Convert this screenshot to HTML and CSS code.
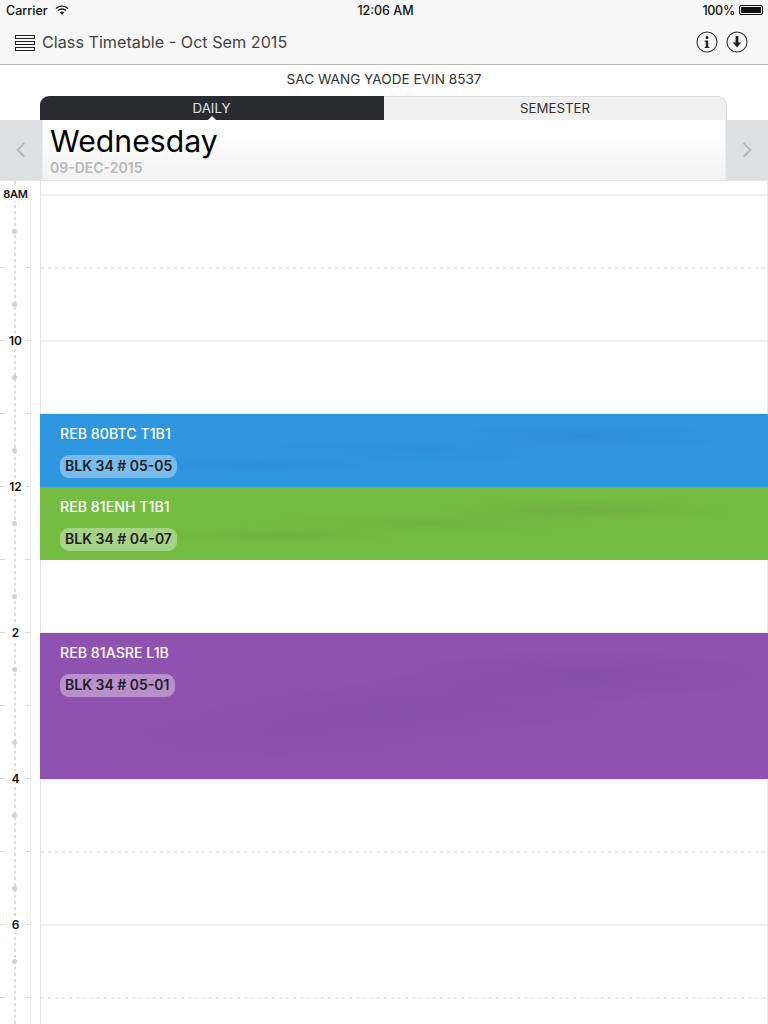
FILE: index.html
```html
<!doctype html>
<html>

<head>
    <meta charset="utf-8">
    <title>Class Timetable</title>
    <link rel="stylesheet" href="styles.css">
</head>

<body>
    <header class="top">
        <div class="status">
            <div class="status-left">
                <span>Carrier</span>
                <svg class="wifi" width="14" height="10" viewBox="0 0 14 10">
                    <path d="M1 3.6a8.6 8.6 0 0 1 12 0" fill="none" stroke="#111" stroke-width="1.4" />
                    <path d="M3.1 5.6a5.6 5.6 0 0 1 7.8 0" fill="none" stroke="#111" stroke-width="1.4" />
                    <path d="M7 9.8 4.9 7.5a3 3 0 0 1 4.2 0z" fill="#111" />
                </svg>
            </div>
            <div class="status-time">12:06 AM</div>
            <div class="status-right">
                <span class="percent">100%</span>
                <span class="battery"><span class="battery-fill"></span></span>
            </div>
        </div>
        <div class="nav">
            <span class="burger"><i></i><i></i><i></i></span>
            <span class="nav-title">Class Timetable - Oct Sem 2015</span>
            <svg class="nav-icon" width="22" height="22" viewBox="0 0 22 22">
                <circle cx="11" cy="11" r="10" fill="none" stroke="#333" stroke-width="1.1" />
                <circle cx="11" cy="6.4" r="1.5" fill="#222" />
                <path d="M8.8 9.4h3.4v6.4h1.1v1.3H8.7v-1.3h1.1v-5.1h-1z" fill="#222" />
            </svg>
            <svg class="nav-icon" width="22" height="22" viewBox="0 0 22 22">
                <circle cx="11" cy="11" r="10" fill="none" stroke="#333" stroke-width="1.1" />
                <path d="M9.6 5h2.8v6.4h2.8L11 16.6l-4.200-5.200h2.800z" fill="#222" />
            </svg>
        </div>
    </header>

    <div class="student">SAC WANG YAODE EVIN 8537</div>

    <div class="tabs">
        <div class="tab tab-on">DAILY</div>
        <div class="tab">SEMESTER</div>
    </div>

    <div class="dayrow">
        <div class="daybtn">
            <svg width="10" height="16" viewBox="0 0 10 16">
                <path d="M8.500 1 1.500 8l7 7" fill="none" stroke="#b9b9b9" stroke-width="2" />
            </svg>
        </div>
        <div class="dayname">
            <div class="day-big">Wednesday</div>
            <div class="day-date">09-DEC-2015</div>
        </div>
        <div class="daybtn">
            <svg width="10" height="16" viewBox="0 0 10 16">
                <path d="M1.500 1l7 7-7 7" fill="none" stroke="#b9b9b9" stroke-width="2" />
            </svg>
        </div>
    </div>

    <div class="table">
        <div class="axis">
            <div class="hour hour-first"><div class="mark"><b>8AM</b></div><i class="dot"></i></div>
            <div class="hour"><div class="mark"><u></u><u></u></div><i class="dot"></i></div>
            <div class="hour"><div class="mark"><u></u><b>10</b><u></u></div><i class="dot"></i></div>
            <div class="hour"><div class="mark"><u></u><u></u></div><i class="dot"></i></div>
            <div class="hour"><div class="mark"><u></u><b>12</b><u></u></div><i class="dot"></i></div>
            <div class="hour"><div class="mark"><u></u><u></u></div><i class="dot"></i></div>
            <div class="hour"><div class="mark"><u></u><b>2</b><u></u></div><i class="dot"></i></div>
            <div class="hour"><div class="mark"><u></u><u></u></div><i class="dot"></i></div>
            <div class="hour"><div class="mark"><u></u><b>4</b><u></u></div><i class="dot"></i></div>
            <div class="hour"><div class="mark"><u></u><u></u></div><i class="dot"></i></div>
            <div class="hour"><div class="mark"><u></u><b>6</b><u></u></div><i class="dot"></i></div>
            <div class="hour"><div class="mark"><u></u><u></u></div><i class="dot"></i></div>
        </div>
        <div class="day">
            <div class="slot solid"></div>
            <div class="slot dashed"></div>
            <div class="slot solid"></div>
            <div class="slot lesson blue">
                <div class="lesson-name">REB 80BTC T1B1</div>
                <span class="room">BLK 34 # 05-05</span>
            </div>
            <div class="slot lesson green">
                <div class="lesson-name">REB 81ENH T1B1</div>
                <span class="room">BLK 34 # 04-07</span>
            </div>
            <div class="slot"></div>
            <div class="slot slot-long lesson purple">
                <div class="lesson-name">REB 81ASRE L1B</div>
                <span class="room">BLK 34 # 05-01</span>
            </div>
            <div class="slot solid"></div>
            <div class="slot dashed"></div>
            <div class="slot solid"></div>
            <div class="slot dashed"></div>
        </div>
    </div>
</body>

</html>
```

FILE: styles.css
```css
* {
    margin: 0;
    box-sizing: border-box;
}

body {
    width: 768px;
    height: 1024px;
    overflow: hidden;
    background: #fff;
    font-family: Inter, "Noto Sans", sans-serif;
    color: #222;
}

/* status bar + nav */
.top {
    height: 65px;
    background: #f7f7f7;
    border-bottom: 1px solid #b4b4b4;
}

.status {
    height: 20px;
    padding: 0 5px 0 6px;
    display: grid;
    grid-template-columns: 1fr auto 1fr;
    align-items: center;
    font-size: 12.500px;
    font-weight: 500;
    color: #111;
}

.status-left {
    display: flex;
    align-items: center;
    gap: 7px;
}

.status-time {
    padding-left: 2px;
}

.status-right {
    display: flex;
    justify-content: flex-end;
    align-items: center;
    gap: 4px;
}

.percent {
    letter-spacing: -.3px;
}

.battery {
    width: 24px;
    height: 10px;
    padding: 1px;
    border: 1px solid #111;
    border-radius: 2px;
}

.battery-fill {
    display: block;
    height: 100%;
    background: #111;
    border-radius: 1px;
}

.nav {
    height: 44px;
    padding: 0 20px 0 15px;
    display: flex;
    align-items: center;
}

.burger {
    width: 20px;
    display: flex;
    flex-direction: column;
    gap: 2px;
    margin-top: 1px;
}

.burger i {
    height: 4px;
    border: 1px solid #222;
    background: #f7f7f7;
}

.nav-title {
    margin-left: 7px;
    flex: 1;
    font-size: 16.200px;
    color: #444;
}

.nav-icon {
    margin-left: 8px;
}

.student {
    height: 31px;
    line-height: 29px;
    text-align: center;
    font-size: 13.600px;
    color: #333;
}

/* tabs */
.tabs {
    height: 24px;
    margin: 0 41px 0 40px;
    display: flex;
}

.tab {
    flex: 1;
    line-height: 22px;
    text-align: center;
    font-size: 13.300px;
    color: #333;
    background: #f0f0f0;
    border: 1px solid #dcdcdc;
    border-bottom: 0;
    border-left: 0;
    border-radius: 0 9px 0 0;
}

.tab-on {
    flex: none;
    width: 344px;
    position: relative;
    line-height: 24px;
    color: #e2e2e2;
    background: #2a2b30;
    border: 0;
    border-radius: 9px 0 0 0;
    padding-right: 1px;
}

.tab-on:after {
    content: "";
    position: absolute;
    left: 168px;
    bottom: 0;
    border: 4px solid transparent;
    border-top: 0;
    border-bottom: 4px solid #fff;
}

/* day header */
.dayrow {
    height: 61px;
    display: flex;
    border-bottom: 1px solid #e4e4e4;
}

.daybtn {
    width: 42px;
    background: #dfe0e1;
    display: flex;
    align-items: center;
    justify-content: center;
}

.dayname {
    flex: 1;
    padding-left: 7px;
    background: linear-gradient(#fff 25%, #f1f1f1);
    border-left: 1px solid #ececec;
    border-right: 1px solid #ececec;
}

.day-big {
    font-size: 30.200px;
    line-height: 42px;
    color: #000;
}

.day-date {
    font-size: 14px;
    font-weight: 600;
    line-height: 16px;
    margin-top: -2px;
    color: #b8b8b8;
}

/* timetable */
.table {
    display: flex;
}

.axis {
    width: 31px;
    margin-right: 9px;
    padding-top: 13px;
    height: 843px;
    border-right: 1px solid #efefef;
    border-top-right-radius: 6px;
    background: repeating-linear-gradient(#dcdcdc 0 3px, #fff 3px 6px) no-repeat 14px 0 / 2px 100%;
}

.hour {
    height: 73px;
    display: flex;
    flex-direction: column;
    align-items: center;
}

.mark {
    width: 100%;
    height: 12px;
    margin-top: -6px;
    display: flex;
    align-items: center;
    justify-content: space-between;
}

.mark u {
    width: 5px;
    height: 1px;
    background: #d8d8d8;
}

.mark b {
    margin-left: 1px;
    padding: 0 2px;
    background: #fff;
    font-size: 12px;
    font-weight: 600;
    color: #111;
}

.hour-first .mark {
    justify-content: center;
}

.hour-first .mark b {
    font-size: 11px;
    padding: 0;
    letter-spacing: -.2px;
}

.dot {
    width: 5px;
    height: 5px;
    margin-top: 29px;
    margin-right: 1px;
    border-radius: 50%;
    background: #d2d2d2;
}

.day {
    flex: 1;
    height: 843px;
    padding-top: 14px;
    border-left: 1px solid #e2e2e2;
    border-right: 1px solid #e8e8e8;
}

.slot {
    height: 73px;
}

.slot-long {
    height: 146px;
}

.solid,
.dashed {
    height: 74px;
    margin-top: -1px;
}

.solid {
    border-top: 2px solid #f0f0f0;
}

.dashed {
    background: repeating-linear-gradient(90deg, #e9e9e9 0 3px, transparent 3px 7px) no-repeat 0 0 / 100% 2px;
}

.lesson {
    position: relative;
    margin: 0 -1px;
    padding: 12px 20px 0;
}

.lesson-name {
    font-size: 14.200px;
    font-weight: 500;
    line-height: 16px;
    color: #fff;
}

.room {
    display: inline-block;
    margin-top: 13px;
    padding: 0 5px;
    height: 23px;
    line-height: 22px;
    border-radius: 9px;
    background: rgba(255, 255, 255, .36);
    font-size: 14px;
    font-weight: 600;
    color: #222;
}

.blue {
    box-shadow: 0 -1px 0 #e6e6e6;
    background:
        radial-gradient(170px 12px at 544px 23px, rgba(0, 0, 0, .05), transparent),
        radial-gradient(190px 12px at 387px 36px, rgba(0, 0, 0, .04), transparent),
        radial-gradient(130px 10px at 220px 51px, rgba(0, 0, 0, .05), transparent),
        #2e97e0;
}

.green {
    background:
        radial-gradient(170px 12px at 544px 23px, rgba(0, 0, 0, .05), transparent),
        radial-gradient(190px 12px at 387px 36px, rgba(0, 0, 0, .04), transparent),
        radial-gradient(130px 10px at 240px 48px, rgba(0, 0, 0, .05), transparent),
        #75bc42;
}

.purple {
    box-shadow: 0 -1px 0 #eee, 0 1px 0 #eee;
    background:
        radial-gradient(230px 28px at 544px 42px, rgba(0, 0, 0, .06), transparent),
        radial-gradient(250px 34px at 387px 74px, rgba(0, 0, 0, .05), transparent),
        radial-gradient(220px 34px at 240px 102px, rgba(0, 0, 0, .04), transparent),
        #8f52b0;
}
```
